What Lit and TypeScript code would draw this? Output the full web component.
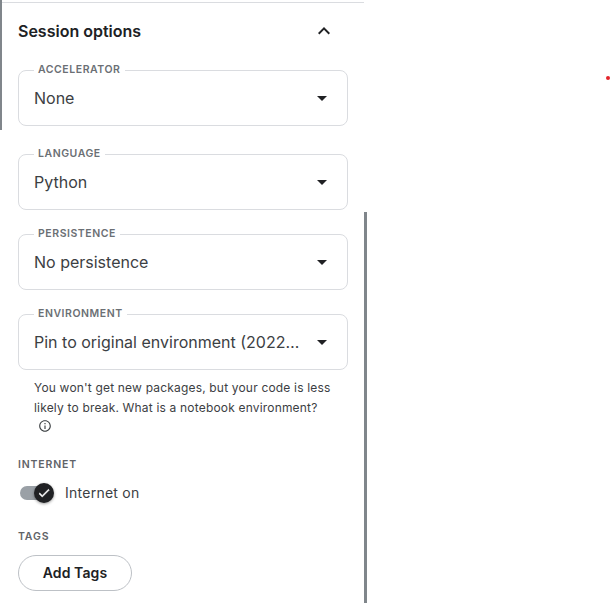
import { LitElement, html, css } from "lit";
import { customElement } from "lit/decorators.js";

const caret = html`<svg class="caret" width="24" height="24" viewBox="0 0 24 24"><path d="M7 10l5 5 5-5z" fill="#202124"/></svg>`;

@customElement("app-root")
export class AppRoot extends LitElement {
  static styles = css`
    :host { display: block; position: relative; width: 611px; height: 603px; overflow: hidden; background: #fff;
      font-family: Inter, "Liberation Sans", sans-serif; color: #202124; }
    .panel { box-sizing: border-box; width: 363px; height: 603px; margin-top: 2px; margin-left: 1px; border-top: 1px solid #dadce0; padding: 0 15px 0 17px; overflow: hidden; }
    .head { display: flex; align-items: center; justify-content: space-between; height: 56px; padding-right: 13px; }
    .head h2 { margin: 0; font-size: 16px; line-height: 24px; font-weight: 600; color: #202124; }
    .chev { display: block; }
    .fields { display: flex; flex-direction: column; gap: 24px; margin-top: 11px; }
    .field { position: relative; box-sizing: border-box; width: 330px; height: 56px; border: 1px solid #dadce0; border-radius: 8px; display: flex; align-items: center; justify-content: space-between; padding: 0 9px 0 15px; }
    .field.first { margin-bottom: 4px; }
    .legend { position: absolute; left: 15px; top: -7px; padding: 0 4px; background: #fff; font-size: 10.5px; line-height: 12px; font-weight: 600; letter-spacing: 0.55px; color: #6b6f74; text-transform: uppercase; white-space: nowrap; }
    .value { font-size: 16px; line-height: 24px; color: #3c4043; white-space: nowrap; }
    .caret { display: block; flex: none; margin-right: 4px; }
    .help { margin: 8px 16px 0 16px; font-size: 12px; line-height: 20px; color: #3c4043; letter-spacing: 0.18px; width: 300px; }
    .info { display: block; margin: 1px 0 0 4px; }
    .section { font-size: 10.5px; line-height: 12px; font-weight: 600; letter-spacing: 0.85px; color: #5f6368; text-transform: uppercase; }
    .internet { margin-top: 26px; }
    .toggle-row { display: flex; align-items: center; gap: 13px; margin-top: 7px; height: 30px; }
    .switch { position: relative; width: 32px; height: 14px; margin-left: 2px; background: #9aa0a6; border-radius: 7px; }
    .knob { position: absolute; right: -2px; top: -3px; width: 20px; height: 20px; border-radius: 50%; background: #202124; box-shadow: 0 1px 3px rgba(0,0,0,.4); display: flex; align-items: center; justify-content: center; }
    .toggle-label { font-size: 14px; line-height: 20px; color: #3c4043; letter-spacing: 0.25px; }
    .tags { margin-top: 23px; }
    .btn { display: block; box-sizing: border-box; margin-top: 12px; width: 114px; height: 36px; border: 1px solid #bdc1c6; border-radius: 18px; background: #fff; font: 600 14px/20px Inter, "Liberation Sans", sans-serif; letter-spacing: 0.1px; color: #202124; padding: 0; }
    .bar-left { position: absolute; left: 0; top: 0; width: 2px; height: 130px; background: #80868b; }
    .bar-right { position: absolute; left: 364px; top: 212px; width: 3px; height: 391px; background: #80868b; }
    .dot { position: absolute; left: 606px; top: 76px; width: 4px; height: 4px; border-radius: 50%; background: #e3242b; }
  `;

  private field(label: string, value: string, cls = "") {
    return html`<div class="field ${cls}"><span class="legend">${label}</span><span class="value">${value}</span>${caret}</div>`;
  }

  render() {
    return html`
      <div class="panel">
        <div class="head">
          <h2>Session options</h2>
          <svg class="chev" width="24" height="24" viewBox="0 0 24 24"><path d="M7.4 15.400L12 10.800l4.600 4.600L18 14l-6-6-6 6z" fill="#202124"/></svg>
        </div>
        <div class="fields">
          ${this.field("Accelerator", "None", "first")}
          ${this.field("Language", "Python")}
          ${this.field("Persistence", "No persistence")}
          ${this.field("Environment", "Pin to original environment (2022…")}
        </div>
        <div class="help">You won't get new packages, but your code is less likely to break. What is a notebook environment?
          <svg class="info" width="14" height="14" viewBox="0 0 24 24"><path d="M11 7h2v2h-2zm0 4h2v6h-2zm1-9C6.500 2 2 6.500 2 12s4.500 10 10 10 10-4.500 10-10S17.500 2 12 2zm0 18c-4.400 0-8-3.600-8-8s3.600-8 8-8 8 3.600 8 8-3.600 8-8 8z" fill="#3c4043"/></svg>
        </div>
        <div class="section internet">Internet</div>
        <div class="toggle-row">
          <div class="switch"><div class="knob"><svg width="14" height="14" viewBox="0 0 24 24"><path d="M9 16.200L4.800 12l-1.400 1.400L9 19 21 7l-1.400-1.400z" fill="#fff" stroke="#fff" stroke-width="1"/></svg></div></div>
          <span class="toggle-label">Internet on</span>
        </div>
        <div class="section tags">Tags</div>
        <button class="btn">Add Tags</button>
      </div>
      <div class="bar-left"></div>
      <div class="bar-right"></div>
      <div class="dot"></div>
    `;
  }
}
